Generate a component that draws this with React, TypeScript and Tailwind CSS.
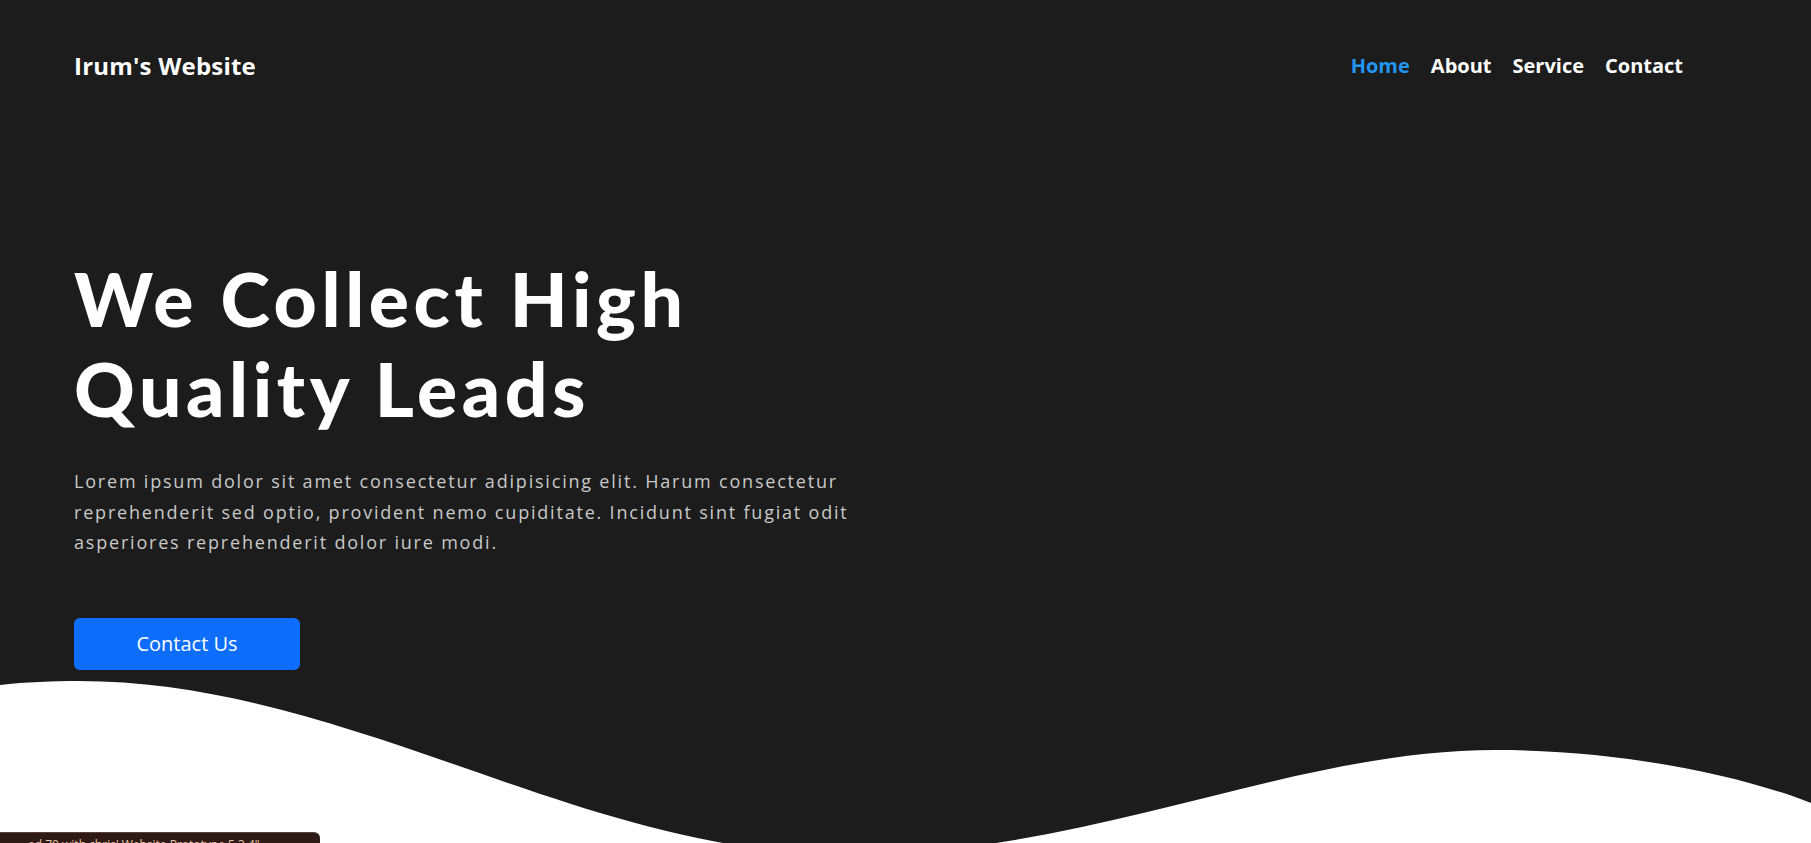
import React from "react";

const navLinks = ["Home", "About", "Service", "Contact"];

export default function App() {
  return (
    <div className="min-h-screen bg-white font-['Open_Sans',sans-serif]">
      <section className="bg-[#1c1c1c]">
        {/* Navbar */}
        <header className="flex h-[132px] items-center justify-between pl-[74px] pr-[128px]">
          <a className="text-[24px] font-bold tracking-[0.2px] text-white">
            Irum's Website
          </a>
          <nav className="flex items-center gap-[21px] text-[20px] font-bold">
            {navLinks.map((link, i) => (
              <a
                key={link}
                className={i === 0 ? "text-[#2196f3]" : "text-white"}
              >
                {link}
              </a>
            ))}
          </nav>
        </header>

        {/* Hero */}
        <div className="pl-[74px]">
          <h1 className="mt-[121px] font-['Lato',sans-serif] text-[75px] font-black leading-[90px] tracking-[4.6px] text-white">
            We Collect High
            <br />
            Quality Leads
          </h1>
          <p className="mt-[33px] w-[810px] text-[18px] leading-[30.5px] tracking-[1.8px] text-[#c9c9c9]">
            Lorem ipsum dolor sit amet consectetur adipisicing elit. Harum
            consectetur reprehenderit sed optio, provident nemo cupiditate.
            Incidunt sint fugiat odit asperiores reprehenderit dolor iure modi.
          </p>
          <button className="mt-[60px] h-[52px] w-[226px] rounded-md bg-[#0d6efd] text-[20px] text-white">
            Contact Us
          </button>
        </div>
      </section>

      {/* Wave divider */}
      <svg
        viewBox="0 0 1811 200"
        preserveAspectRatio="none"
        className="block h-[200px] w-full bg-[#1c1c1c]"
      >
        <path
          fill="#ffffff"
          d="M0,15 C25,12 55,11 78,11 C350,11 580,185 850,185 C1090,185 1290,80 1496,80 C1620,80 1740,105 1811,133 L1811,200 L0,200 Z"
        />
      </svg>

      {/* status overlay */}
      <div className="fixed bottom-[-8px] left-0 flex h-[19px] w-[320px] items-start overflow-hidden rounded-tr-md border-t border-[#5a4038] bg-[#2e1b17] pl-[28px] pt-[4px] text-[12px] leading-[16px] whitespace-nowrap text-[#e8c4a8]">
        ed 70 with chris' Website Prototype 5.3 4"
      </div>
    </div>
  );
}
